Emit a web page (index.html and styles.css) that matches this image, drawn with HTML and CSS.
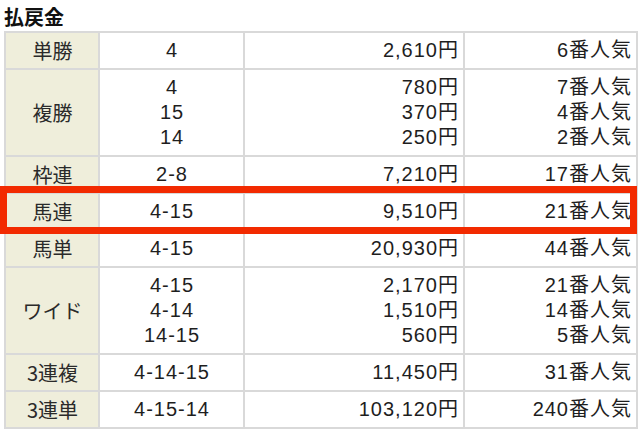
FILE: index.html
```html
<!DOCTYPE html>
<html lang="ja">
<head>
<meta charset="utf-8">
<link rel="stylesheet" href="styles.css">
</head>
<body>
<div class="payout">
  <h2 class="title">払戻金</h2>
  <table class="pay-table">
    <colgroup>
      <col class="c-type"><col class="c-num"><col class="c-yen"><col class="c-pop">
    </colgroup>
    <tr><th>単勝</th><td class="num">4</td><td class="yen">2,610円</td><td class="pop">6番人気</td></tr>
    <tr><th>複勝</th><td class="num">4<br>15<br>14</td><td class="yen">780円<br>370円<br>250円</td><td class="pop">7番人気<br>4番人気<br>2番人気</td></tr>
    <tr><th>枠連</th><td class="num">2-8</td><td class="yen">7,210円</td><td class="pop">17番人気</td></tr>
    <tr><th>馬連</th><td class="num">4-15</td><td class="yen">9,510円</td><td class="pop">21番人気</td></tr>
    <tr><th>馬単</th><td class="num">4-15</td><td class="yen">20,930円</td><td class="pop">44番人気</td></tr>
    <tr><th>ワイド</th><td class="num">4-15<br>4-14<br>14-15</td><td class="yen">2,170円<br>1,510円<br>560円</td><td class="pop">21番人気<br>14番人気<br>5番人気</td></tr>
    <tr><th>3連複</th><td class="num">4-14-15</td><td class="yen">11,450円</td><td class="pop">31番人気</td></tr>
    <tr><th>3連単</th><td class="num">4-15-14</td><td class="yen">103,120円</td><td class="pop">240番人気</td></tr>
  </table>
  <div class="highlight"></div>
</div>
</body>
</html>
```
FILE: styles.css
```css
html, body {
  margin: 0;
  padding: 0;
  background: #ffffff;
}
body {
  font-family: "Liberation Sans", "Noto Sans CJK JP", sans-serif;
  color: #1e1e1e;
}
.payout {
  position: relative;
  padding: 6px 0 0 4px;
  width: 633px;
}
.title {
  margin: 0;
  font-size: 20px;
  font-weight: bold;
  line-height: 22px;
  height: 25px;
  color: #111;
  font-family: "Noto Sans CJK JP", sans-serif;
}
.pay-table {
  border-collapse: collapse;
  table-layout: fixed;
  width: 632px;
  font-size: 20px;
  letter-spacing: 1px;
}
.c-type { width: 94px; }
.c-num { width: 145px; }
.c-yen { width: 220px; }
.c-pop { width: 173px; }
.pay-table th,
.pay-table td {
  border: 2px solid #d9d9d9;
  padding: 5px 4px 5px 5px;
  line-height: 25px;
  vertical-align: middle;
}
.pay-table th {
  background: #efeedb;
  font-weight: normal;
  text-align: center;
  font-family: "Noto Sans CJK JP", sans-serif;
  letter-spacing: 0;
  color: #2a2a2a;
}
.num { text-align: center; }
.yen, .pop { text-align: right; }
.highlight {
  position: absolute;
  left: 0;
  top: 186px;
  width: 623px;
  height: 34px;
  border: 7px solid #f22a00;
}
```
